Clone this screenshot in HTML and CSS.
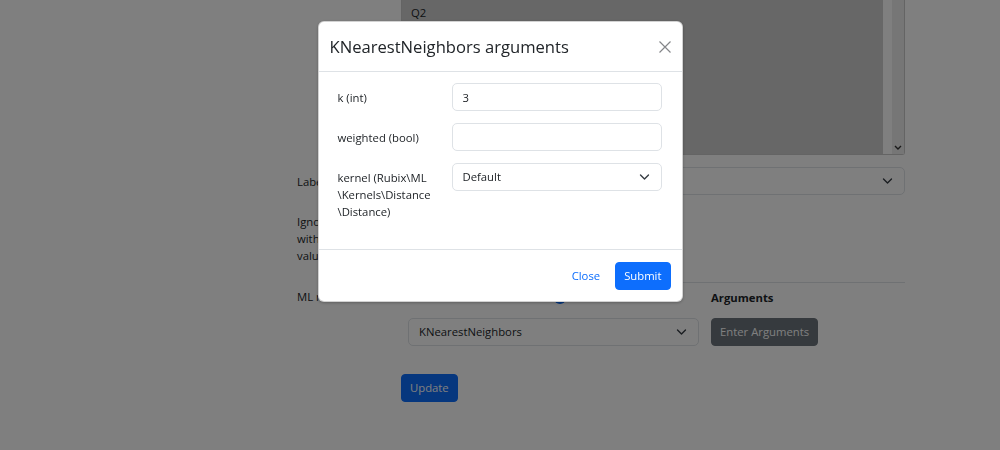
FILE: index.html
```html
<!doctype html>
<html>
<head>
<meta charset="utf-8">
<title>Model training</title>
<link rel="stylesheet" href="styles.css">
</head>
<body>

<main class="settings">

    <!-- feature columns -->
    <div class="field">
        <div class="field-label"></div>
        <div class="field-input">
            <div class="listbox">
                <ul class="listbox-options">
                    <li>Q2</li>
                    <li>Q3</li>
                    <li>Q4</li>
                    <li>Q5</li>
                    <li>Q6</li>
                    <li>Q7</li>
                    <li>Q8</li>
                </ul>
                <div class="listbox-scroll">
                    <svg width="8" height="5" viewBox="0 0 8 5"><path d="M1 1l3 3 3-3" fill="none" stroke="#333" stroke-width="1.4"/></svg>
                </div>
            </div>
        </div>
    </div>

    <div class="field">
        <label class="field-label">Label column</label>
        <div class="field-input">
            <div class="select">
                <span>target</span>
                <svg width="11" height="8" viewBox="0 0 16 12"><path d="M2 3l6 6 6-6" fill="none" stroke="#343a40" stroke-width="2" stroke-linecap="round" stroke-linejoin="round"/></svg>
            </div>
        </div>
    </div>

    <div class="field field-ignore">
        <label class="field-label">Ignore columns with missing values</label>
        <div class="field-input check">
            <input type="checkbox">
        </div>
    </div>

    <div class="field field-ml">
        <label class="field-label">ML model</label>
        <div class="field-input ml-grid">
            <div class="ml-head ml-head-help">
                <svg width="12" height="12" viewBox="0 0 16 16"><circle cx="8" cy="8" r="8" fill="#0d6efd"/></svg>
            </div>
            <div class="ml-head">Arguments</div>
            <div class="select">
                <span>KNearestNeighbors</span>
                <svg width="11" height="8" viewBox="0 0 16 12"><path d="M2 3l6 6 6-6" fill="none" stroke="#343a40" stroke-width="2" stroke-linecap="round" stroke-linejoin="round"/></svg>
            </div>
            <div><button type="button" class="btn btn-secondary">Enter Arguments</button></div>
        </div>
    </div>

    <div class="actions">
        <button type="button" class="btn btn-primary">Update</button>
    </div>

</main>

<div class="modal-backdrop"></div>

<div class="modal">
    <div class="modal-dialog">

        <div class="modal-header">
            <h5 class="modal-title">KNearestNeighbors arguments</h5>
            <button type="button" class="btn-close" aria-label="Close">
                <svg width="12" height="12" viewBox="0 0 12 12"><path d="M0.5 0.5l11 11M11.5 0.5l-11 11" stroke="#212529" stroke-width="1.2"/></svg>
            </button>
        </div>

        <div class="modal-body">
            <label class="arg-label">k (int)</label>
            <input class="control" type="text" value="3">

            <label class="arg-label">weighted (bool)</label>
            <input class="control" type="text">

            <label class="arg-label">kernel (Rubix\ML \Kernels\Distance \Distance)</label>
            <div class="select">
                <span>Default</span>
                <svg width="11" height="8" viewBox="0 0 16 12"><path d="M2 3l6 6 6-6" fill="none" stroke="#343a40" stroke-width="2" stroke-linecap="round" stroke-linejoin="round"/></svg>
            </div>
        </div>

        <div class="modal-footer">
            <button type="button" class="btn btn-link">Close</button>
            <button type="button" class="btn btn-primary">Submit</button>
        </div>

    </div>
</div>

</body>
</html>
```

FILE: styles.css
```css
* { box-sizing: border-box; }
body { margin: 0; padding: 0; font-family: "Open Sans", "Noto Sans", sans-serif; font-size: 11.3px; line-height: 1.5; color: #212529; background-color: #fff; }

/* page form */
.settings { width: 608px; margin-left: 297px; }
.field { display: flex; margin-bottom: 12px; }
.field-ignore { margin-bottom: 18px; }
.field-label { width: 104px; flex: none; padding: 6px 8px 0 0; line-height: 17px; }
.field-input { flex: 1; min-width: 0; }
.check { padding-top: 8px; }

.listbox { display: flex; height: 155px; background-color: #fff; border: 1px solid #c9c9c9; border-top: 0; border-radius: 0 0 3px 3px; }
.listbox-options { flex: 1; margin: 0 9px 0 0; padding: 4px 0 0 0; list-style: none; background-color: #cecece; }
.listbox-options li { padding: 0 9px; line-height: 18px; }
.listbox-scroll { width: 12px; display: flex; align-items: flex-end; justify-content: center; padding-bottom: 4px; background-color: #ececec; }

.select { display: flex; align-items: center; justify-content: space-between; height: 28px; padding: 0 11px 0 10px; background-color: #fff; border: 1px solid #dee2e6; border-radius: 5px; }

.field-ml .field-label { padding-top: 6px; }
.field-ml .field-input { border-top: 1px solid #dee2e6; padding: 6px 0 0 7px; }
.ml-grid { display: grid; grid-template-columns: 291px auto; column-gap: 12px; row-gap: 12px; }
.ml-head { font-weight: 700; line-height: 17px; }
.ml-head-help { display: flex; justify-content: center; padding: 3px 0 0 12px; }

.actions { padding: 16px 0 0 104px; }

.btn { display: inline-block; height: 28px; padding: 0 8px; font: inherit; line-height: 26px; border: 1px solid transparent; border-radius: 4px; cursor: pointer; }
.btn-primary { background-color: #0d6efd; border-color: #0d6efd; color: #fff; }
.btn-secondary { background-color: #6c757d; border-color: #6c757d; color: #fff; }
.btn-link { padding: 0 9px; background: none; color: #0d6efd; }

/* arguments dialog */
.modal-backdrop { position: fixed; top: 0; left: 0; width: 100%; height: 100%; background-color: rgba(0,0,0,.5); }
.modal { position: fixed; top: 0; left: 0; width: 100%; height: 100%; display: flex; justify-content: center; align-items: flex-start; padding-top: 21px; }
.modal-dialog { width: 365px; background-color: #fff; border: 1px solid rgba(0,0,0,.175); border-radius: 6px; box-shadow: 0 1px 3px rgba(0,0,0,.25); }

.modal-header { display: flex; align-items: center; justify-content: space-between; padding: 12px 11px 12px 11px; border-bottom: 1px solid #dee2e6; }
.modal-title { margin: 0; font-size: 16.6px; font-weight: 400; line-height: 25px; }
.btn-close { display: flex; padding: 0; background: none; border: 0; opacity: .55; cursor: pointer; }

.modal-body { display: grid; grid-template-columns: 114px 1fr; row-gap: 12px; padding: 11px 20px 29px 19px; }
.arg-label { padding: 6px 6px 0 0; line-height: 17px; }
.control { height: 28px; padding: 0 10px; font: inherit; color: #212529; border: 1px solid #dee2e6; border-radius: 5px; outline: none; }

.modal-footer { display: flex; justify-content: flex-end; align-items: center; gap: 5px; padding: 12px 11px 11px; border-top: 1px solid #dee2e6; }
```
